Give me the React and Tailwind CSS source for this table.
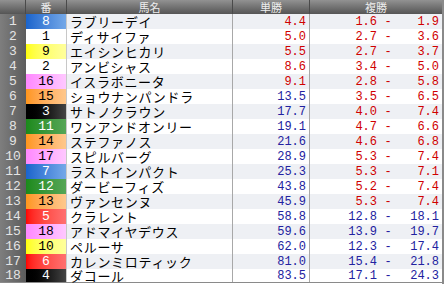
import React from 'react';

const WAKU = {
  1: 'bg-white text-black',
  2: 'bg-gradient-to-r from-[#000000] to-[#444444] text-white',
  3: 'bg-gradient-to-r from-[#ff0000] to-[#ff7070] text-white',
  4: 'bg-gradient-to-r from-[#1a64cc] to-[#74a8e8] text-white',
  5: 'bg-gradient-to-r from-[#ffff00] to-[#ffff9c] text-black',
  6: 'bg-gradient-to-r from-[#1a8a1a] to-[#56a656] text-white',
  7: 'bg-gradient-to-r from-[#ff961a] to-[#ffc88c] text-black',
  8: 'bg-gradient-to-r from-[#ff88ff] to-[#ffc8ff] text-black',
};

const wakuOf = (n) => (n <= 12 ? Math.ceil(n / 2) : n <= 15 ? 7 : 8);

const rows = [
  [8, 'ラブリーデイ', '4.4', '1.6', '1.9'],
  [1, 'ディサイファ', '5.0', '2.7', '3.6'],
  [9, 'エイシンヒカリ', '5.5', '2.7', '3.7'],
  [2, 'アンビシャス', '8.6', '3.4', '5.0'],
  [16, 'イスラボニータ', '9.1', '2.8', '5.8'],
  [15, 'ショウナンパンドラ', '13.5', '3.5', '6.5'],
  [3, 'サトノクラウン', '17.7', '4.0', '7.4'],
  [11, 'ワンアンドオンリー', '19.1', '4.7', '6.6'],
  [14, 'ステファノス', '21.6', '4.6', '6.8'],
  [17, 'スピルバーグ', '28.9', '5.3', '7.4'],
  [7, 'ラストインパクト', '25.3', '5.3', '7.1'],
  [12, 'ダービーフィズ', '43.8', '5.2', '7.4'],
  [13, 'ヴァンセンヌ', '45.9', '5.3', '7.4'],
  [5, 'クラレント', '58.8', '12.8', '18.1'],
  [18, 'アドマイヤデウス', '59.6', '13.9', '19.7'],
  [10, 'ペルーサ', '62.0', '12.3', '17.4'],
  [6, 'カレンミロティック', '81.0', '15.4', '21.8'],
  [4, 'ダコール', '83.5', '17.1', '24.3'],
];

const num = "font-['Liberation_Mono','Noto_Sans_CJK_JP',monospace]";
const cols = 'grid grid-cols-[26px_41px_166px_77px_132px]';

export default function App() {
  return (
    <div className="w-[444px] h-[284px] overflow-hidden bg-white font-['Noto_Sans_CJK_JP',sans-serif] border-r-2 border-[#8a8a8a]">
      {/* header */}
      <div className={`${cols} h-[14px] bg-gradient-to-b from-[#929292] to-[#555555] text-[#eeeeee] text-[11px] leading-none`}>
        <div className="border-r border-[#4a4a4a]" />
        <div className="flex items-center justify-center border-r border-[#4a4a4a]">番</div>
        <div className="flex items-center justify-center border-r border-[#4a4a4a]">馬名</div>
        <div className="flex items-center justify-center border-r border-[#4a4a4a]">単勝</div>
        <div className="flex items-center justify-center">複勝</div>
      </div>

      {rows.map(([no, name, win, lo, hi], i) => {
        const stripe = i % 2 === 0 ? 'bg-[#eef0f4]' : 'bg-white';
        const winColor = parseFloat(win) < 10 ? 'text-[#d00000]' : 'text-[#2222a0]';
        const placeColor = parseFloat(lo) < 10 ? 'text-[#d00000]' : 'text-[#2222a0]';
        const last = i === rows.length - 1;
        return (
          <div
            key={i}
            className={`${cols} ${last ? 'h-[14px] border-b-2 border-[#8a8a8a]' : 'h-[15px]'} leading-none`}
          >
            <div className={`flex items-center justify-center bg-gradient-to-r from-[#7e7e7e] to-[#5c5c5c] text-[#e4e4e4] text-[13px] ${num}`}>
              {i + 1}
            </div>
            <div className={`${WAKU[wakuOf(no)]} flex items-center justify-center text-[13px] ${num} border-r border-[#c8c8c8]`}>
              {no}
            </div>
            <div className={`${stripe} flex items-center text-[13px] tracking-[0.7px] text-black pl-[3px] whitespace-nowrap border-r border-[#a8a8a8]`}>
              {name}
            </div>
            <div className={`${stripe} ${winColor} flex items-center justify-end pr-[3px] text-[12px] ${num} border-r border-[#a8a8a8]`}>
              {win}
            </div>
            <div className={`${stripe} ${placeColor} flex items-center text-[12px] ${num}`}>
              <span className="w-[67px] text-right">{lo}</span>
              <span className="w-[22px] text-center">-</span>
              <span className="w-[40px] text-right">{hi}</span>
            </div>
          </div>
        );
      })}
    </div>
  );
}
